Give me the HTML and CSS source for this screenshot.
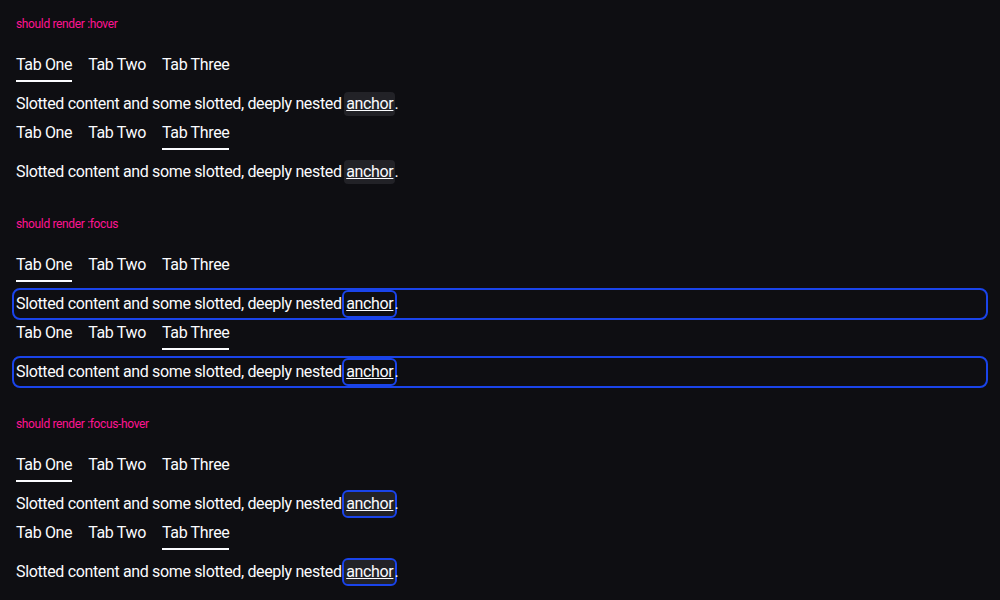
FILE: index.html
```html
<!DOCTYPE html>
<html lang="en">
<head>
<meta charset="utf-8">
<title>Tabs states</title>
<link rel="stylesheet" href="styles.css">
</head>
<body>
  <section class="state">
    <p class="label">should render :hover</p>
    <div class="tabs">
      <nav class="tabs-bar">
        <span class="tab is-active">Tab One</span>
        <span class="tab">Tab Two</span>
        <span class="tab">Tab Three</span>
      </nav>
      <div class="panel">Slotted content and some slotted, deeply nested <a class="anchor is-hover" href="#">anchor</a>.</div>
    </div>
    <div class="tabs">
      <nav class="tabs-bar">
        <span class="tab">Tab One</span>
        <span class="tab">Tab Two</span>
        <span class="tab is-active">Tab Three</span>
      </nav>
      <div class="panel">Slotted content and some slotted, deeply nested <a class="anchor is-hover" href="#">anchor</a>.</div>
    </div>
  </section>

  <section class="state">
    <p class="label">should render :focus</p>
    <div class="tabs">
      <nav class="tabs-bar">
        <span class="tab is-active">Tab One</span>
        <span class="tab">Tab Two</span>
        <span class="tab">Tab Three</span>
      </nav>
      <div class="panel is-focus">Slotted content and some slotted, deeply nested <a class="anchor is-focus" href="#">anchor</a>.</div>
    </div>
    <div class="tabs">
      <nav class="tabs-bar">
        <span class="tab">Tab One</span>
        <span class="tab">Tab Two</span>
        <span class="tab is-active">Tab Three</span>
      </nav>
      <div class="panel is-focus">Slotted content and some slotted, deeply nested <a class="anchor is-focus" href="#">anchor</a>.</div>
    </div>
  </section>

  <section class="state">
    <p class="label">should render :focus-hover</p>
    <div class="tabs">
      <nav class="tabs-bar">
        <span class="tab is-active">Tab One</span>
        <span class="tab">Tab Two</span>
        <span class="tab">Tab Three</span>
      </nav>
      <div class="panel">Slotted content and some slotted, deeply nested <a class="anchor is-hover is-focus" href="#">anchor</a>.</div>
    </div>
    <div class="tabs">
      <nav class="tabs-bar">
        <span class="tab">Tab One</span>
        <span class="tab">Tab Two</span>
        <span class="tab is-active">Tab Three</span>
      </nav>
      <div class="panel">Slotted content and some slotted, deeply nested <a class="anchor is-hover is-focus" href="#">anchor</a>.</div>
    </div>
  </section>
</body>
</html>
```

FILE: styles.css
```css
html, body {
  margin: 0;
  padding: 0;
  background: #0e0e12;
}

body {
  font-family: Roboto, "Liberation Sans", sans-serif;
  color: #fbfcff;
  font-size: 16px;
  line-height: 24px;
  letter-spacing: -0.35px;
}

.state {
  height: 200px;
  box-sizing: border-box;
  padding: 16px 16px 0;
}

.label {
  margin: 0 0 16px;
  font-size: 12px;
  line-height: 16px;
  color: #ff1493;
}

.tabs-bar {
  display: flex;
  gap: 16px;
  padding-top: 5px;
}

.tab {
  padding-bottom: 3px;
  border-bottom: 2px solid transparent;
}

.tab.is-active {
  border-bottom-color: #fbfcff;
}

.panel {
  margin-top: 10px;
  border-radius: 4px;
}

.panel.is-focus {
  outline: 2px solid #1a44ea;
  outline-offset: 2px;
}

.anchor {
  display: inline-block;
  color: #fbfcff;
  text-decoration: underline;
  padding: 0 2px;
  margin-left: -1px;
  margin-right: -1px;
  border-radius: 4px;
}

.anchor.is-hover {
  background: #222227;
}

.anchor.is-focus {
  outline: 2px solid #1a44ea;
  outline-offset: 0;
}
```
